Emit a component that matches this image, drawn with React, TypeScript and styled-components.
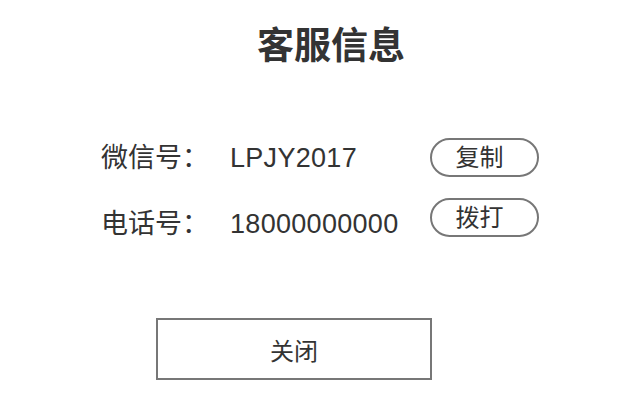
import React from "react";
import styled, { createGlobalStyle } from "styled-components";

const Global = createGlobalStyle`
  html, body {
    margin: 0;
    padding: 0;
    background: #ffffff;
  }
  body {
    font-family: "Liberation Sans", "Noto Sans CJK SC", sans-serif;
    color: #333333;
  }
`;

const Page = styled.div`
  width: 628px;
  height: 404px;
  box-sizing: border-box;
  padding-top: 25px;
  display: flex;
  flex-direction: column;
`;

const Title = styled.h1`
  margin: 0;
  padding-left: 34px;
  text-align: center;
  font-size: 37px;
  line-height: 44px;
  font-weight: 700;
  color: #333333;
`;

const Rows = styled.div`
  margin-top: 69px;
  padding-left: 101px;
  display: grid;
  row-gap: 21px;
`;

const Row = styled.div<{ $drop?: number }>`
  display: flex;
  align-items: center;
  height: 39px;
  font-size: 27px;
  color: #333333;

  & > span {
    padding-top: ${(p) => (p.$drop ?? 0) * 2}px;
  }
`;

const Label = styled.span`
  width: 129px;
  flex: none;
  line-height: 32px;
`;

const Value = styled.span`
  width: 200px;
  flex: none;
  line-height: 32px;
  letter-spacing: 0.3px;
`;

const PillButton = styled.button`
  box-sizing: border-box;
  width: 109px;
  height: 39px;
  border: 2px solid #777777;
  border-radius: 20px;
  background: #ffffff;
  padding: 0 10px 0 0;
  font-family: inherit;
  font-size: 24px;
  line-height: 35px;
  color: #333333;
  cursor: pointer;
`;

const CloseButton = styled.button`
  box-sizing: border-box;
  margin-top: 81px;
  margin-left: 156px;
  width: 276px;
  height: 62px;
  border: 2px solid #777777;
  background: #ffffff;
  padding: 0;
  font-family: inherit;
  font-size: 24px;
  color: #333333;
  cursor: pointer;
`;

export default function App() {
  return (
    <>
      <Global />
      <Page>
        <Title>客服信息</Title>
        <Rows>
          <Row>
            <Label>微信号：</Label>
            <Value>LPJY2017</Value>
            <PillButton>复制</PillButton>
          </Row>
          <Row $drop={6}>
            <Label>电话号：</Label>
            <Value>18000000000</Value>
            <PillButton>拨打</PillButton>
          </Row>
        </Rows>
        <CloseButton>关闭</CloseButton>
      </Page>
    </>
  );
}
